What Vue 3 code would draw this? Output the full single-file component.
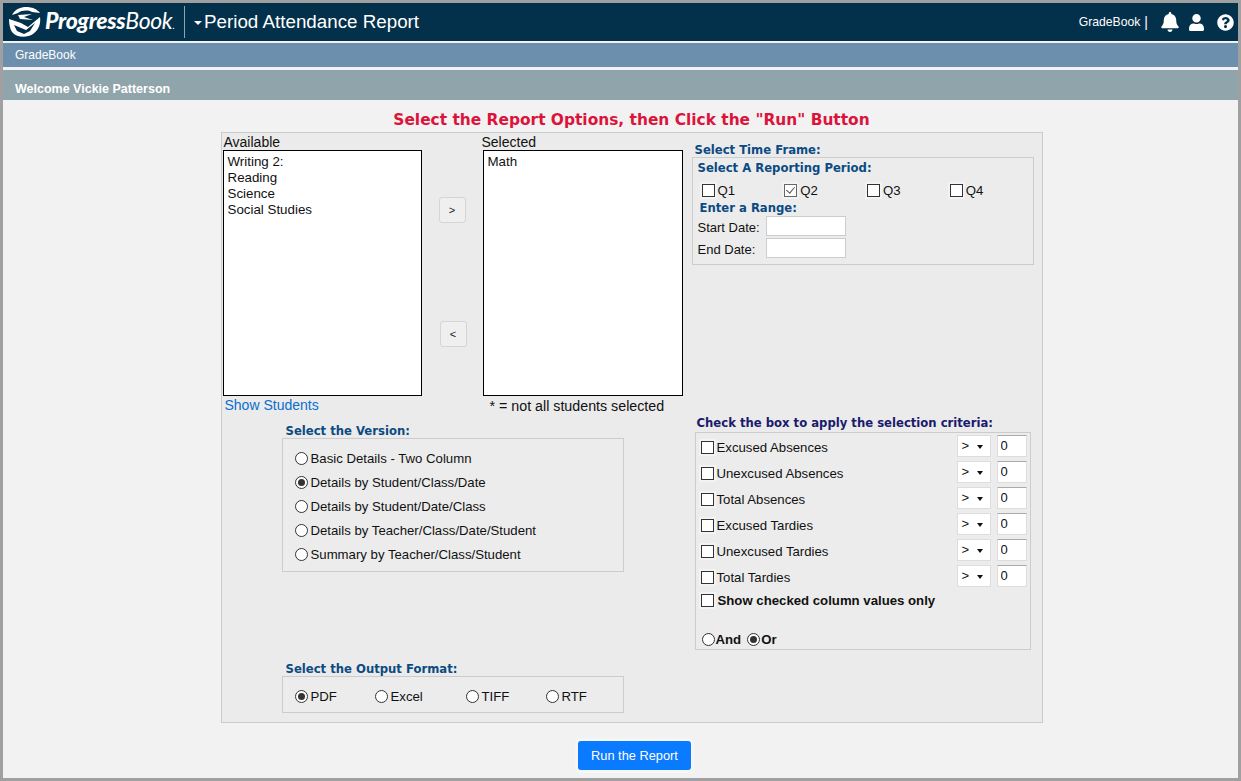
<script setup>
const availableItems = ['Writing 2:', 'Reading', 'Science', 'Social Studies']
const versions = [
  { label: 'Basic Details - Two Column', checked: false },
  { label: 'Details by Student/Class/Date', checked: true },
  { label: 'Details by Student/Date/Class', checked: false },
  { label: 'Details by Teacher/Class/Date/Student', checked: false },
  { label: 'Summary by Teacher/Class/Student', checked: false },
]
const formats = [
  { label: 'PDF', checked: true },
  { label: 'Excel', checked: false },
  { label: 'TIFF', checked: false },
  { label: 'RTF', checked: false },
]
const quarters = [
  { label: 'Q1', checked: false },
  { label: 'Q2', checked: true },
  { label: 'Q3', checked: false },
  { label: 'Q4', checked: false },
]
const criteria = [
  'Excused Absences',
  'Unexcused Absences',
  'Total Absences',
  'Excused Tardies',
  'Unexcused Tardies',
  'Total Tardies',
]
</script>

<template>
  <div class="frame">
    <header class="topbar">
      <div class="logo">
        <svg class="logo-mark" width="34" height="32" viewBox="0 0 34 32">
          <path d="M4 9 C7 3 13 1 18 1 C24 1 29 3 32 7 L24 6 C20 4 14 4 10 7 Z" fill="#fff" />
          <path d="M10 9 L24 8 L16 11 L25 14 L12 13 Z" fill="#fff" />
          <path d="M1 13 L13 17 L20 21 L32 11 C33 17 31 24 25 28 C19 32 9 32 4 26 C2 23 1 18 1 13 Z" fill="#fff" />
          <path d="M6 19 L18 24 L27 17 L22 25 L16 28 L9 25 Z" fill="#03304a" />
        </svg>
        <span class="logo-text"><b>Progress</b>Book<i>.</i></span>
      </div>
      <div class="title">
        <span class="caret"></span>
        <span>Period Attendance Report</span>
      </div>
      <div class="top-right">
        <span class="app-name">GradeBook</span>
        <span class="pipe">|</span>
        <svg class="ico bell" width="18" height="20" viewBox="0 0 448 512" fill="#fff">
          <path d="M224 512c35 0 64-29 64-64H160c0 35 29 64 64 64zm215-150c-19-21-55-52-55-154 0-78-54-140-128-155V32a32 32 0 1 0-64 0v21C118 68 64 130 64 208c0 102-36 133-55 154-6 6-9 14-9 22 0 16 13 32 32 32h384c19 0 32-16 32-32 0-8-3-16-9-22z" />
        </svg>
        <svg class="ico user" width="15" height="17" viewBox="0 0 448 512" fill="#fff">
          <path d="M224 256a128 128 0 1 0 0-256 128 128 0 0 0 0 256zm90 32h-17a174 174 0 0 1-146 0h-17C60 288 0 348 0 422v42c0 27 21 48 48 48h352c27 0 48-21 48-48v-42c0-74-60-134-134-134z" />
        </svg>
        <svg class="ico" width="17" height="17" viewBox="0 0 512 512" fill="#fff">
          <path d="M504 256c0 137-111 248-248 248S8 393 8 256 119 8 256 8s248 111 248 248zM263 90c-54 0-89 23-116 63-4 5-2 12 3 16l35 26c5 4 13 3 17-2 18-22 30-35 57-35 20 0 45 13 45 32 0 15-12 22-32 33-23 13-54 29-54 70v6c0 7 5 12 12 12h56c7 0 12-5 12-12v-3c0-28 83-30 83-106 0-58-60-100-118-100zm-7 244a46 46 0 1 0 0 92 46 46 0 0 0 0-92z" />
        </svg>
      </div>
    </header>
    <nav class="navbar">GradeBook</nav>
    <div class="welcome">Welcome Vickie Patterson</div>

    <main class="content">
      <h1 class="page-title">Select the Report Options, then Click the "Run" Button</h1>

      <section class="panel">
        <div class="left">
          <div class="lists">
            <div class="list-col">
              <div class="list-label">Available</div>
              <div class="listbox">
                <div v-for="item in availableItems" :key="item">{{ item }}</div>
              </div>
              <a class="show-link">Show Students</a>
            </div>
            <div class="move-btns">
              <button class="move">&gt;</button>
              <button class="move back">&lt;</button>
            </div>
            <div class="list-col selected-col">
              <div class="list-label">Selected</div>
              <div class="listbox selected-box">
                <div>Math</div>
              </div>
              <div class="note">* = not all students selected</div>
            </div>
          </div>

          <div class="group version-group">
            <h2 class="heading">Select the Version:</h2>
            <div class="box version-box">
              <label v-for="v in versions" :key="v.label" class="opt">
                <input type="radio" name="version" :checked="v.checked" />{{ v.label }}
              </label>
            </div>
          </div>

          <div class="group output-group">
            <h2 class="heading">Select the Output Format:</h2>
            <div class="box output-box">
              <label v-for="f in formats" :key="f.label" class="opt fmt">
                <input type="radio" name="format" :checked="f.checked" />{{ f.label }}
              </label>
            </div>
          </div>
        </div>

        <div class="right">
          <h2 class="heading time-heading">Select Time Frame:</h2>
          <div class="box time-box">
            <h3 class="heading period-heading">Select A Reporting Period:</h3>
            <div class="quarters">
              <label v-for="q in quarters" :key="q.label" class="opt quarter">
                <input type="checkbox" :checked="q.checked" />{{ q.label }}
              </label>
            </div>
            <h3 class="heading range-heading">Enter a Range:</h3>
            <div class="date-row"><span>Start Date:</span><input class="date" type="text" /></div>
            <div class="date-row"><span>End Date:</span><input class="date" type="text" /></div>
          </div>

          <h2 class="heading criteria-heading">Check the box to apply the selection criteria:</h2>
          <div class="box criteria-box">
            <div v-for="c in criteria" :key="c" class="crit-row">
              <label class="opt crit-label"><input type="checkbox" />{{ c }}</label>
              <div class="fake-select">&gt;</div>
              <input class="crit-val" type="text" value="0" />
            </div>
            <label class="opt show-only"><input type="checkbox" />Show checked column values only</label>
            <div class="and-or">
              <label class="opt"><input type="radio" name="logic" />And</label>
              <label class="opt"><input type="radio" name="logic" checked />Or</label>
            </div>
          </div>
        </div>
      </section>

      <button class="run">Run the Report</button>
    </main>
  </div>
</template>

<style>
html,
body {
  margin: 0;
  background: #f2f2f2;
}
</style>

<style scoped>
.frame {
  box-sizing: border-box;
  width: 1241px;
  height: 781px;
  border: 3px solid #a0a0a0;
  display: flex;
  flex-direction: column;
  font-family: "Liberation Sans", Arial, sans-serif;
  font-size: 13px;
  color: #111;
  overflow: hidden;
}

.topbar {
  height: 38px;
  flex: none;
  background: #03304a;
  display: flex;
  align-items: center;
  color: #fff;
}
.logo {
  display: flex;
  align-items: center;
  width: 182px;
  height: 32px;
  border-right: 1px solid #8fa4ab;
  box-sizing: border-box;
  padding-left: 5px;
}
.logo-mark {
  flex: none;
}
.logo-text {
  font-family: "Lato", sans-serif;
  font-style: italic;
  font-size: 23px;
  letter-spacing: -0.35px;
  margin-left: 3px;
  font-weight: 400;
  line-height: 32px;
}
.logo-text b {
  font-weight: 900;
}
.logo-text i {
  font-size: 10px;
}
.title {
  display: flex;
  align-items: center;
  font-size: 18.8px;
  margin-left: 9px;
}
.caret {
  width: 0;
  height: 0;
  border-left: 4px solid transparent;
  border-right: 4px solid transparent;
  border-top: 4px solid #fff;
  margin-right: 2px;
  margin-top: 2px;
}
.top-right {
  margin-left: auto;
  display: flex;
  align-items: center;
  padding-right: 4px;
}
.app-name {
  font-size: 12.2px;
}
.pipe {
  font-size: 14px;
  margin: 0 13px 0 4px;
}
.bell {
  margin-right: 10px;
  margin-top: -1px;
}
.user {
  margin-right: 13px;
}

.navbar {
  flex: none;
  margin-top: 2px;
  height: 24px;
  line-height: 24px;
  background: #6b8fad;
  color: #fff;
  padding-left: 12px;
  font-size: 12px;
}
.welcome {
  flex: none;
  margin-top: 3px;
  height: 30px;
  line-height: 38px;
  background: #8fa4ab;
  color: #fff;
  font-weight: 700;
  font-size: 12.5px;
  padding-left: 12px;
  overflow: hidden;
}

.content {
  flex: 1;
  background: #f2f2f2;
  display: flex;
  flex-direction: column;
  align-items: center;
  padding-left: 22px;
}
.page-title {
  margin: 10px 0 0;
  font-family: "DejaVu Sans", Verdana, sans-serif;
  font-size: 15.42px;
  line-height: 20px;
  font-weight: 700;
  color: #dc143c;
}

.panel {
  box-sizing: border-box;
  width: 822px;
  height: 591px;
  margin-top: 2px;
  border: 1px solid #ccc;
  background: #ebebeb;
  display: flex;
}
.left {
  width: 470px;
  flex: none;
}
.right {
  flex: 1;
}

.lists {
  display: flex;
}
.list-col {
  width: 199px;
  margin-left: 1px;
}
.list-label {
  font-size: 14px;
  line-height: 16px;
  padding-top: 1px;
  margin-left: 1px;
  color: #111;
}
.listbox {
  box-sizing: border-box;
  width: 199px;
  height: 246px;
  border: 1px solid #000;
  background: #fff;
  padding: 3px 4px;
  font-size: 13.33px;
  line-height: 16px;
}
.selected-col {
  width: 200px;
  margin-left: 0;
}
.selected-col .list-label {
  margin-left: -1px;
}
.selected-box {
  width: 200px;
}
.show-link {
  display: block;
  margin: 1px 0 0 2px;
  font-size: 14px;
  line-height: 17px;
  color: #0a6ed1;
}
.note {
  margin: 2px 0 0 7px;
  font-size: 14.25px;
  line-height: 17px;
}
.move-btns {
  width: 61px;
  flex: none;
  box-sizing: border-box;
  padding: 64px 0 0 17px;
  display: flex;
  flex-direction: column;
  gap: 98px;
}
.move {
  box-sizing: border-box;
  width: 27px;
  height: 26px;
  padding: 0;
  border: 1px solid #d5d5d5;
  border-radius: 3px;
  background: #efefef;
  font-family: "Liberation Sans", Arial, sans-serif;
  font-size: 11px;
  color: #222;
}
.back {
  margin-left: 1px;
}

.heading {
  margin: 0;
  font-family: "DejaVu Sans", Verdana, sans-serif;
  font-size: 11.65px;
  line-height: 15px;
  font-weight: 700;
  color: #0b4a82;
}
.box {
  box-sizing: border-box;
  border: 1px solid #ccc;
  background: #ececec;
}
.group {
  margin-left: 60px;
  width: 342px;
}
.group .heading {
  margin-left: 4px;
}
.version-group {
  margin-top: 9px;
}
.version-box {
  height: 134px;
  margin-top: -1px;
  padding: 7px 0 0 12px;
}
.version-box .opt {
  height: 24px;
}
.output-group {
  margin-top: 90px;
}
.output-box {
  height: 37px;
  margin-top: -1px;
  padding: 4px 0 0 12px;
  display: flex;
}

.opt {
  display: flex;
  align-items: center;
  font-size: 13.2px;
  white-space: nowrap;
}
.opt input {
  appearance: none;
  box-sizing: border-box;
  width: 13px;
  height: 13px;
  margin: 0 3px 0 0;
  background: #fff;
  border: 1px solid #333;
  position: relative;
  flex: none;
}
.opt input[type="checkbox"] {
  box-shadow: 0 0 0 2px #f3f3f3;
}
.opt input[type="radio"] {
  border-radius: 50%;
}
.opt input[type="radio"]:checked::after {
  content: "";
  position: absolute;
  left: 2px;
  top: 2px;
  width: 7px;
  height: 7px;
  border-radius: 50%;
  background: #333;
}
.opt input[type="checkbox"]:checked {
  border-color: #666;
}
.opt input[type="checkbox"]:checked::after {
  content: "";
  position: absolute;
  left: 3px;
  top: 0;
  width: 4px;
  height: 7px;
  border-right: 1.5px solid #555;
  border-bottom: 1.5px solid #555;
  transform: rotate(40deg);
}
.fmt:nth-child(1) {
  width: 80px;
}
.fmt:nth-child(2) {
  width: 91px;
}
.fmt:nth-child(3) {
  width: 80px;
}

.time-heading {
  margin: 10px 0 0 3px;
}
.time-box {
  width: 342px;
  height: 108px;
  margin-top: -1px;
  padding: 3px 0 0 5px;
}
.quarters {
  display: flex;
  margin: 6px 0 0 4px;
  height: 16px;
}
.quarter {
  width: 83px;
}
.range-heading {
  margin: 3px 0 0 2px;
}
.date-row {
  display: flex;
  align-items: center;
  height: 22px;
  font-size: 13px;
}
.date-row span {
  width: 68px;
}
.date {
  box-sizing: border-box;
  width: 80px;
  height: 20px;
  margin-top: -2px;
  border: 1px solid #ccc;
  background: #fff;
}

.criteria-heading {
  margin: 151px 0 0 5px;
  color: #1a1a6e;
}
.criteria-box {
  width: 336px;
  height: 218px;
  margin: 1px 0 0 3px;
  padding-top: 0;
}
.crit-row {
  display: flex;
  align-items: center;
  height: 26px;
  padding: 0 3px 0 5px;
}
.crit-label {
  flex: 1;
  margin-top: 2px;
}
.fake-select {
  box-sizing: border-box;
  width: 34px;
  height: 22px;
  border: 1px solid #ddd;
  background: #fff;
  padding-left: 4px;
  line-height: 20px;
  font-size: 13px;
  position: relative;
}
.fake-select::after {
  content: "";
  position: absolute;
  right: 7px;
  top: 9px;
  border-left: 3.5px solid transparent;
  border-right: 3.5px solid transparent;
  border-top: 4px solid #111;
}
.crit-val {
  box-sizing: border-box;
  width: 30px;
  height: 22px;
  margin-left: 6px;
  padding: 0 0 2px 3px;
  border: 1px solid #ddd;
  border-top-color: #aaa;
  background: #fff;
  font-family: "Liberation Sans", Arial, sans-serif;
  font-size: 13px;
  color: #111;
}
.show-only {
  font-weight: 700;
  height: 22px;
  padding-left: 5px;
}
.show-only input {
  margin-right: 4px;
}
.and-or {
  display: flex;
  gap: 6px;
  margin-top: 21px;
  padding-left: 6px;
}
.and-or .opt {
  font-weight: 700;
}
.and-or input {
  margin-right: 1px;
}

.run {
  margin: 18px 0 0 6px;
  box-sizing: border-box;
  width: 113px;
  height: 29px;
  border: 0;
  border-radius: 3px;
  background: #0a7aff;
  box-shadow: 0 0 0 3px #f6f6f6;
  color: #fff;
  font-family: "Liberation Sans", Arial, sans-serif;
  font-size: 12.8px;
}
</style>
